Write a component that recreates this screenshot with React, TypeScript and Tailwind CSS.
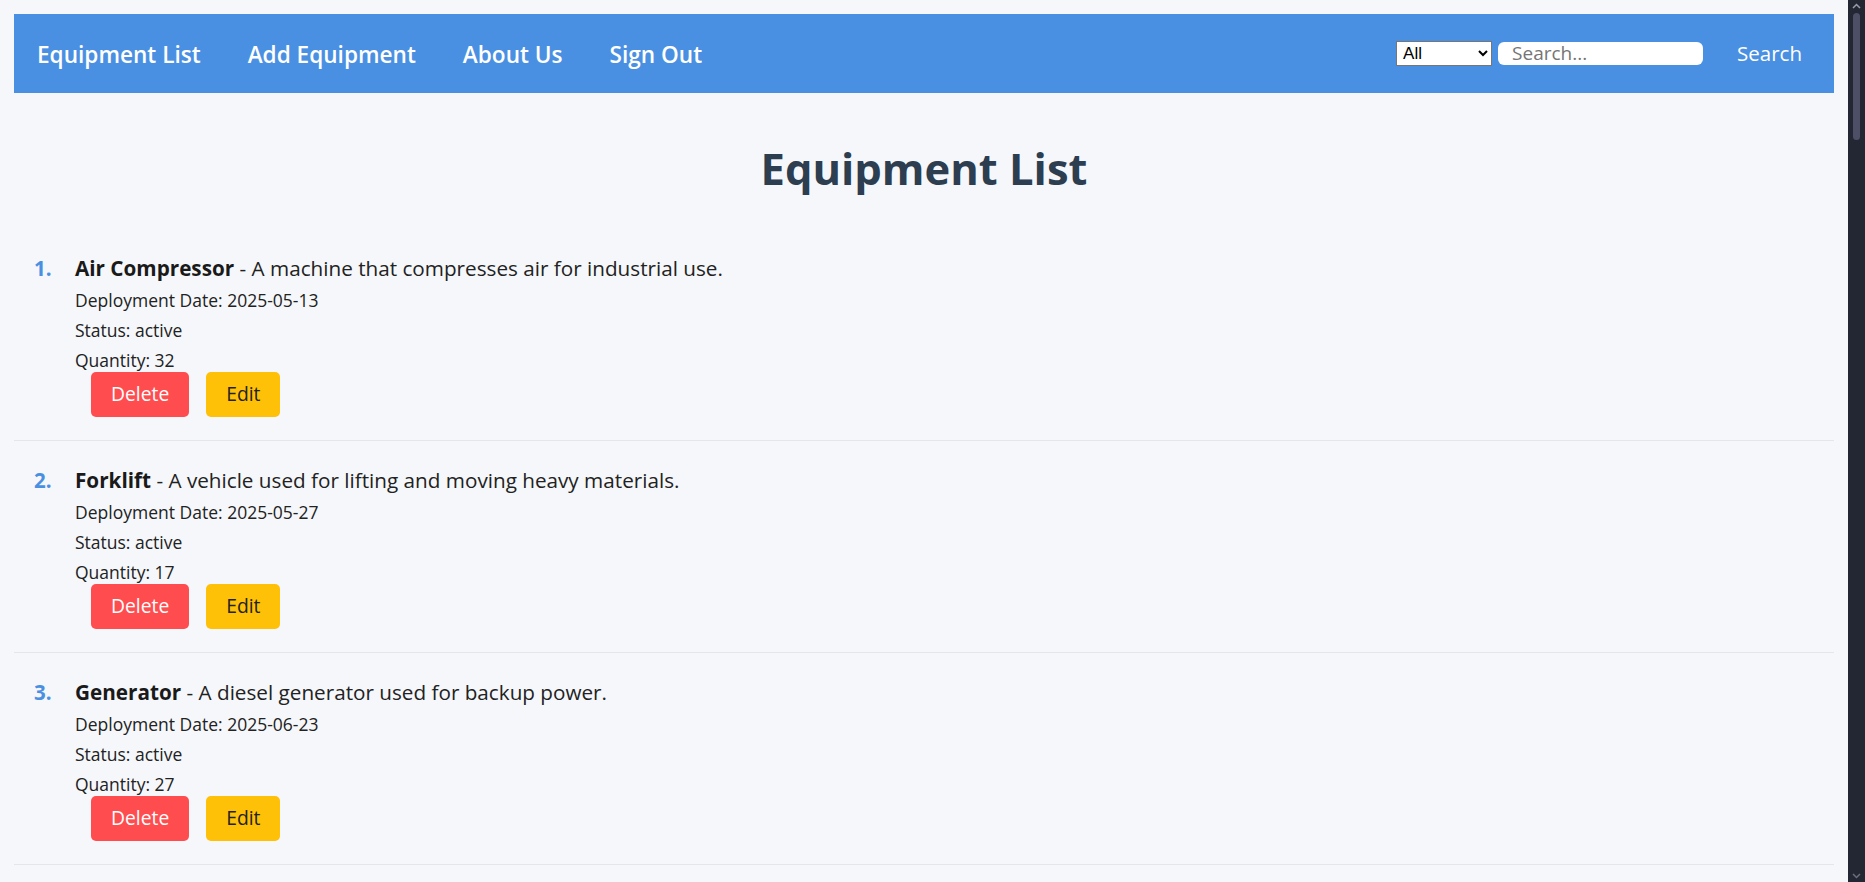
const items = [
  {
    name: "Air Compressor",
    description: "A machine that compresses air for industrial use.",
    date: "2025-05-13",
    status: "active",
    quantity: 32,
  },
  {
    name: "Forklift",
    description: "A vehicle used for lifting and moving heavy materials.",
    date: "2025-05-27",
    status: "active",
    quantity: 17,
  },
  {
    name: "Generator",
    description: "A diesel generator used for backup power.",
    date: "2025-06-23",
    status: "active",
    quantity: 27,
  },
];

function NavBar() {
  return (
    <nav className="flex h-[79px] items-center justify-between bg-[#4a90e2] pl-[23px] pr-[16px]">
      <ul className="flex gap-[47px] pt-[2px] text-[22.6px] font-semibold text-white">
        <li>Equipment List</li>
        <li>Add Equipment</li>
        <li>About Us</li>
        <li>Sign Out</li>
      </ul>
      <div className="flex items-center">
        <select className="h-[25px] w-[96px] border border-[#767676] bg-white pl-[2px] font-['Liberation_Sans',sans-serif] text-[17px] text-black">
          <option>All</option>
        </select>
        <input
          placeholder="Search..."
          className="ml-[6px] h-[23px] w-[205px] rounded-[6px] bg-white px-[14px] text-[19px] text-[#222] outline-none placeholder:text-[#757575]"
        />
        <button className="ml-[18px] px-[16px] text-[20.5px] text-white">
          Search
        </button>
      </div>
    </nav>
  );
}

function Scrollbar() {
  return (
    <div className="flex w-[17px] shrink-0 flex-col items-center bg-[#232733]">
      <svg width="9" height="6" viewBox="0 0 9 6" className="mt-[3px]">
        <path d="M1 5 L4.5 1.5 L8 5" stroke="#9a9cab" strokeWidth="1.5" fill="none" />
      </svg>
      <div className="mt-[4px] h-[127px] w-[7px] rounded-full bg-[#4c4f66]"></div>
      <div className="flex-1"></div>
      <svg width="9" height="6" viewBox="0 0 9 6" className="mb-[3px]">
        <path d="M1 1 L4.5 4.5 L8 1" stroke="#6b6e7e" strokeWidth="1.5" fill="none" />
      </svg>
    </div>
  );
}

export default function App() {
  return (
    <div className="flex h-screen overflow-hidden bg-[#f5f7fa] font-['Open_Sans',sans-serif]">
      <main className="flex-1 overflow-hidden px-[14px] pt-[14px]">
        <NavBar />
        <h1 className="mt-[52px] mb-[36px] text-center text-[43.5px] font-bold leading-[48px] text-[#2c3e50]">
          Equipment List
        </h1>
        <ol>
          {items.map((item, index) => (
            <li
              key={index}
              className="flex border-b border-[#e3e6eb] pt-[26px] pb-[23px] pl-[20px]"
            >
              <span className="w-[41px] text-[20.5px] font-bold leading-[27px] text-[#4a90e2]">
                {index + 1}.
              </span>
              <div className="text-[#222]">
                <p className="text-[20.7px] leading-[27px]">
                  <strong className="font-bold text-[#1a1a1a]">{item.name}</strong> - {item.description}
                </p>
                <p className="mt-[7px] text-[17.5px] leading-[22px]">Deployment Date: {item.date}</p>
                <p className="mt-[8px] text-[17.5px] leading-[22px]">Status: {item.status}</p>
                <p className="mt-[8px] text-[17.5px] leading-[22px]">Quantity: {item.quantity}</p>
                <div className="mt-[1px] ml-[16px] flex gap-[17px]">
                  <button className="h-[45px] rounded-[5px] bg-[#ff4d4f] px-[20px] text-[19.3px] text-white">
                    Delete
                  </button>
                  <button className="h-[45px] rounded-[5px] bg-[#ffc107] px-[20px] text-[19.3px] text-[#222]">
                    Edit
                  </button>
                </div>
              </div>
            </li>
          ))}
        </ol>
      </main>
      <Scrollbar />
    </div>
  );
}
